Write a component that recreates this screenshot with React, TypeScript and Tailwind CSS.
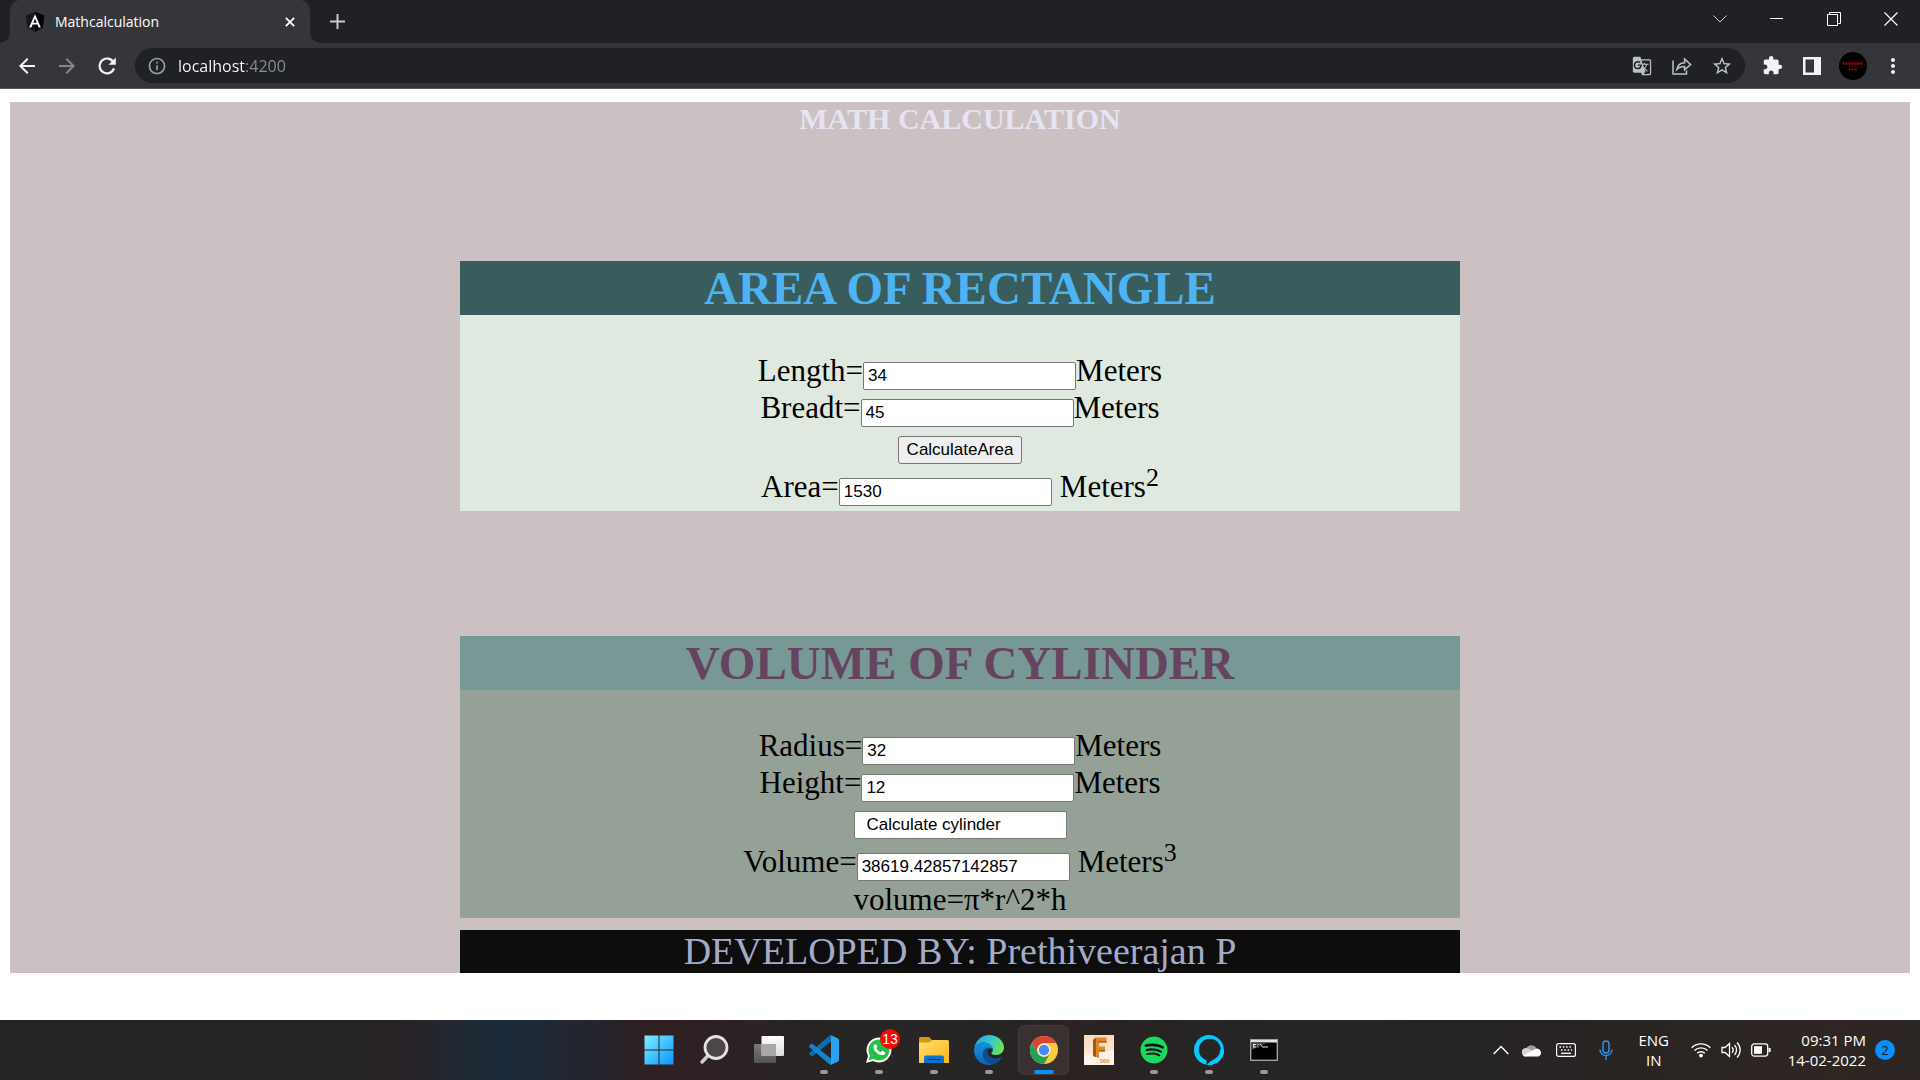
import React, { useState } from "react";
import {
  MdArrowBack,
  MdArrowForward,
  MdExtension,
  MdGTranslate,
  MdInfoOutline,
  MdMoreVert,
  MdStarBorder,
} from "react-icons/md";
import { FaSpotify, FaWhatsapp } from "react-icons/fa";

const fieldBox =
  "block h-7 w-[213px] rounded-[2px] border border-[#767676] bg-white px-1 font-['Liberation_Sans',Arial,sans-serif] text-[17px] leading-5 text-black";

function Field({
  id,
  label,
  value,
  onChange,
  unit,
  power,
}: {
  id: string;
  label: string;
  value: string;
  onChange?: (v: string) => void;
  unit: string;
  power?: string;
}) {
  return (
    <div className={power ? "flex h-[42px] items-baseline justify-center pt-px" : "flex h-[37px] items-baseline justify-center"}>
      <label htmlFor={id}>{label}=</label>
      <input
        id={id}
        className={fieldBox}
        value={value}
        readOnly={!onChange}
        onChange={(e) => onChange && onChange(e.target.value)}
      />
      <span className={power ? "pl-2" : ""}>
        {unit}
        {power && <sup className="static align-super text-[26px] leading-none">{power}</sup>}
      </span>
    </div>
  );
}

function TabBar() {
  return (
    <div className="flex h-[43px] items-stretch bg-[#202124]">
      <div className="flex w-[10px] bg-[#35363a]">
        <div className="flex-1 rounded-br-[10px] bg-[#202124]" />
      </div>
      <div className="flex w-[300px] items-center rounded-t-[10px] bg-[#35363a] pl-[14px] pr-[10px]">
        <svg width="22" height="22" viewBox="0 0 24 24" aria-hidden="true">
          <path d="M12 1 22 4.600 20.500 18 12 23 3.500 18 2 4.600z" fill="#16171f" />
          <path d="M12 1 22 4.600 20.500 18 12 23z" fill="#03040b" />
          <path d="M12 3.600 5.600 18H8l1.300-3.200h5.400L16 18h2.400zm0 4.700 1.900 4.500h-3.800z" fill="#fff" />
        </svg>
        <span className="ml-[9px] flex-1 text-[14px] leading-5 text-white">Mathcalculation</span>
        <button aria-label="Close tab" className="flex h-5 w-5 items-center justify-center">
          <svg width="10" height="10" viewBox="0 0 12 12" stroke="#fff" strokeWidth="2.200">
            <path d="M1 1l10 10M11 1 1 11" />
          </svg>
        </button>
      </div>
      <div className="flex w-[10px] bg-[#35363a]">
        <div className="flex-1 rounded-bl-[10px] bg-[#202124]" />
      </div>
      <button aria-label="New tab" className="flex w-[34px] items-center justify-center">
        <svg width="15" height="15" viewBox="0 0 15 15" stroke="#c9cacd" strokeWidth="2">
          <path d="M7.500 0v15M0 7.500h15" />
        </svg>
      </button>
      <div className="ml-auto flex h-[37px] text-white">
        <button aria-label="Search tabs" className="flex w-[57px] items-center justify-center">
          <svg width="14" height="8" viewBox="0 0 14 8" fill="none" stroke="#d5d5d7">
            <path d="M.5.5 7 7 13.500.5" />
          </svg>
        </button>
        <button aria-label="Minimize" className="flex w-[57px] items-center justify-center">
          <svg width="13" height="13" viewBox="0 0 13 13" stroke="#fff">
            <path d="M0 6.500h13" />
          </svg>
        </button>
        <button aria-label="Restore" className="flex w-[57px] items-center justify-center">
          <svg width="14" height="14" viewBox="0 0 14 14" fill="none" stroke="#fff">
            <path d="M.5 2.500h10v11H.5zM2.500 2.500v-2h11v11h-2.500" />
          </svg>
        </button>
        <button aria-label="Close window" className="flex w-[58px] items-center justify-center">
          <svg width="14" height="14" viewBox="0 0 14 14" stroke="#fff" strokeWidth="1.200">
            <path d="M.5.5l13 13M13.500.5l-13 13" />
          </svg>
        </button>
      </div>
    </div>
  );
}

function Toolbar() {
  const small = "flex h-9 w-10 items-center justify-center";
  return (
    <div className="flex h-[46px] items-center border-b border-[#5b5c60] bg-[#35363a] pl-[7px] text-[#f1f3f4]">
      <button aria-label="Back" className={small}>
        <MdArrowBack size={24} />
      </button>
      <button aria-label="Forward" className={small + " text-[#85868a]"}>
        <MdArrowForward size={24} />
      </button>
      <button aria-label="Reload" className={small}>
        <svg width="18" height="18" viewBox="0 0 18 18">
          <path d="M15.600 5.600A7.400 7.400 0 1 0 16 11.300" fill="none" stroke="#f1f3f4" strokeWidth="2.200" />
          <path d="M17.800.5v7.300h-7.300z" fill="#f1f3f4" />
        </svg>
      </button>
      <div className="ml-2 flex h-[35px] flex-1 items-center rounded-full bg-[#202124] pl-3">
        <MdInfoOutline size={20} className="text-[#9aa0a6]" />
        <input
          aria-label="Address"
          defaultValue="localhost:4200"
          className="ml-[11px] flex-1 bg-[linear-gradient(90deg,#ffffff_68px,#8b8f94_68px)] bg-clip-text text-[16px] leading-6 text-transparent outline-none"
        />
        <button aria-label="Translate page" className="flex w-10 justify-center text-[#bdc1c6]">
          <MdGTranslate size={20} />
        </button>
        <button aria-label="Share" className="flex w-10 justify-center">
          <svg width="20" height="18" viewBox="0 0 20 18" fill="none" stroke="#bdc1c6" strokeWidth="1.500">
            <path d="M1 3.500V17h13.500v-3.500" />
            <path d="M4.800 12.500C5.500 8 8.500 6 12.600 5.800V2l6 5.500-6 5.300V9.500C9 9.500 6.800 10.300 4.800 12.500z" />
          </svg>
        </button>
        <button aria-label="Bookmark this tab" className="mr-[3px] flex w-10 justify-center text-[#bdc1c6]">
          <MdStarBorder size={22} />
        </button>
      </div>
      <button aria-label="Extensions" className="ml-[7px] flex w-10 justify-center">
        <MdExtension size={21} />
      </button>
      <button aria-label="Side panel" className="flex w-10 justify-center">
        <svg width="18" height="18" viewBox="0 0 18 18">
          <path d="M0 0h18v18H0zM2.500 2.500v13H11v-13z" fill="#f1f3f4" fillRule="evenodd" />
        </svg>
      </button>
      <button aria-label="Profile" className="flex w-[41px] justify-center">
        <span className="flex h-7 w-7 flex-col items-center justify-center rounded-full bg-black">
          <svg width="22" height="12" viewBox="0 0 22 12" fill="none" stroke="#b00d12" strokeWidth="1.300">
            <path d="M1 3.500h2m.8 0h2m.8 0h2.400m.8 0h1.500m.8 0h2.500m.8 0h2m.8 0h2.500" strokeWidth="2.600" strokeDasharray="1.500 .6" />
            <path d="M7 9.500h2m.7 0h2m.7 0h2.500" strokeWidth="2.200" strokeDasharray="1.300 .5" />
          </svg>
        </span>
      </button>
      <button aria-label="Menu" className="mr-2 flex w-[39px] justify-center">
        <MdMoreVert size={24} />
      </button>
    </div>
  );
}

function TaskItem({
  name,
  children,
  running,
  active,
}: {
  name: string;
  children: React.ReactNode;
  running?: boolean;
  active?: boolean;
}) {
  return (
    <button
      aria-label={name}
      className={
        active
          ? "relative mx-[2px] flex h-[50px] w-[51px] items-center justify-center rounded-md border border-[#443b3c] bg-[#383031]"
          : "relative mx-[2px] flex h-[50px] w-[51px] items-center justify-center"
      }
    >
      {children}
      {running && <span className="absolute inset-x-0 bottom-px mx-auto h-1 w-2 rounded-full bg-[#9b9898]" />}
      {active && <span className="absolute inset-x-0 bottom-0 mx-auto h-1 w-5 rounded-full bg-[#0a8fff]" />}
    </button>
  );
}

function Apps() {
  return (
    <div className="flex items-center pl-[2px]">
      <TaskItem name="Start">
        <svg width="30" height="30" viewBox="0 0 30 30">
          <defs>
            <linearGradient id="win" x1="0" y1="0" x2="1" y2="1">
              <stop offset="0" stopColor="#7df0ff" />
              <stop offset="1" stopColor="#0a95ff" />
            </linearGradient>
          </defs>
          <path d="M.5.5h14v14H.5zM15.500.5h14v14h-14zM.5 15.500h14v14H.5zM15.500 15.500h14v14h-14z" fill="url(#win)" />
        </svg>
      </TaskItem>
      <TaskItem name="Search">
        <svg width="30" height="30" viewBox="0 0 30 30">
          <path d="M10.500 19 3 27" stroke="#cfcfd1" strokeWidth="3.500" strokeLinecap="round" />
          <circle cx="17" cy="12.500" r="11" fill="#4d4546" stroke="#dfe1e4" strokeWidth="2.800" />
        </svg>
      </TaskItem>
      <TaskItem name="Task view">
        <svg width="30" height="30" viewBox="0 0 30 30">
          <defs>
            <linearGradient id="tv" x1="0" y1="0" x2="0" y2="1">
              <stop offset="0" stopColor="#fff" />
              <stop offset="1" stopColor="#dcdcdc" />
            </linearGradient>
            <linearGradient id="tvb" x1="0" y1="0" x2="0" y2="1">
              <stop offset="0" stopColor="#7d7979" />
              <stop offset="1" stopColor="#555253" />
            </linearGradient>
          </defs>
          <rect y="9" width="22" height="19" rx="1" fill="url(#tvb)" />
          <rect x="7.500" y="1" width="22.500" height="20" rx="1" fill="url(#tv)" />
          <path d="M7.500 9H22v12H8.500a1 1 0 0 1-1-1z" fill="#a9a7a7" />
        </svg>
      </TaskItem>
      <TaskItem name="Visual Studio Code" running>
        <svg width="30" height="30" viewBox="0 0 30 30">
          <path d="M22 6.500 3.600 20.900a1.200 1.200 0 0 1-1.600 0L.5 19.500a1.200 1.200 0 0 1 0-1.800L20.600.6 22 1z" fill="#0a6db5" />
          <path d="M22 23.500 3.600 9.100a1.200 1.200 0 0 0-1.600 0L.5 10.500a1.200 1.200 0 0 0 0 1.800l20.100 17.100L22 29z" fill="#1583cc" />
          <path d="M22.200 29.800a1.900 1.900 0 0 1-2-.5c.7.700 1.800.2 1.800-.8v-27c0-1-1.100-1.500-1.800-.8a1.900 1.900 0 0 1 2-.5l6.800 3.300c.6.300 1 .9 1 1.600v19.800c0 .7-.4 1.300-1 1.600z" fill="#2ba3f2" />
        </svg>
      </TaskItem>
      <TaskItem name="WhatsApp" running>
        <svg width="28" height="28" viewBox="0 0 28 28">
          <path d="M1 27 3 20a12.500 12.500 0 1 1 5 5z" fill="#fff" />
          <path d="M3.500 24.500 5 19.600a10.500 10.500 0 1 1 3.600 3.500z" fill="#25c04a" />
          <path d="M10.200 8.200c-.5 0-1.700.9-1.700 2.700 0 3.800 4.900 8.300 8.800 8.300 1.900 0 3-1.200 3-2.500 0-.5-2.700-1.900-3.100-1.900-.6 0-1 1.500-1.600 1.500-.9 0-4.300-3-4.300-4.200 0-.5 1-1 1-1.500S11.200 8.200 10.200 8.200z" fill="#fff" />
        </svg>
        <span className="absolute right-1 top-1 flex h-5 w-5 items-center justify-center rounded-full bg-[#fb0505] font-['Liberation_Sans',Arial,sans-serif] text-[14px] leading-none text-white">
          13
        </span>
      </TaskItem>
      <TaskItem name="File Explorer" running>
        <svg width="30" height="30" viewBox="0 0 30 30">
          <defs>
            <linearGradient id="fold" x1="0" y1="0" x2="1" y2="1">
              <stop offset="0" stopColor="#ffdd75" />
              <stop offset="1" stopColor="#fdb913" />
            </linearGradient>
          </defs>
          <path d="M0 3.500A1.500 1.500 0 0 1 1.500 2H10l2.500 2.500V10H0z" fill="#d99a06" />
          <path d="M0 7.500h10L13 5h15.500A1.500 1.500 0 0 1 30 6.500V28H0z" fill="url(#fold)" />
          <path d="M5 28v-5.500a2 2 0 0 1 2-2h16a2 2 0 0 1 2 2V28z" fill="#0b74cc" />
          <path d="M8.500 24.500h13" stroke="#07427f" strokeWidth="1.200" />
        </svg>
      </TaskItem>
      <TaskItem name="Microsoft Edge" running>
        <svg width="30" height="30" viewBox="0 0 30 30">
          <defs>
            <linearGradient id="edgeTop" x1="0" y1=".3" x2="1" y2=".6">
              <stop offset="0" stopColor="#2aa5dd" />
              <stop offset=".5" stopColor="#36c6cf" />
              <stop offset="1" stopColor="#6be848" />
            </linearGradient>
            <linearGradient id="edgeMid" x1="0" y1="0" x2="0" y2="1">
              <stop offset="0" stopColor="#1593d8" />
              <stop offset="1" stopColor="#0d63b8" />
            </linearGradient>
          </defs>
          <path d="M.3 13.500C1.500 5.500 7.500 0 15 0c8.500 0 15 6 15 12.500 0 4.500-3.500 7.500-8 7.500-3.300 0-5.200-1-4.500-2.300 1-1.200 1.500-2 1.300-3.500C18 9.500 13 7.500 9.500 7.500 5 7.500 1.500 10 .3 13.500z" fill="url(#edgeTop)" />
          <path d="M0 15C0 10.500 4.500 7.300 9.500 7.300c4.300 0 8.700 2.400 9.300 6.700-4-2.500-8.300 1.500-7.300 6 1 5 6 8.500 10.500 7.500C19.500 29.200 17.500 30 15 30 6.500 30 0 23.500 0 15z" fill="url(#edgeMid)" />
          <path d="M13.500 12.500C9 14 7.700 19 9.700 23.300c1.800 3.900 6.300 6.500 9.300 6.100 4-1 7.300-3.400 9-6.800.2-.6-.2-.8-.7-.5-6 3-13.800.4-13.800-5.600 0-1.300.5-2.500 1.500-3.300z" fill="#114a8e" />
        </svg>
      </TaskItem>
      <TaskItem name="Google Chrome" active>
        <svg width="28" height="28" viewBox="0 0 28 28">
          <circle cx="14" cy="14" r="14" fill="#fcca41" />
          <path d="M14 0a14 14 0 0 1 12.120 7H14a7 7 0 0 0-6.060 10.500L1.880 7A14 14 0 0 1 14 0z" fill="#dc4437" />
          <path d="M1.880 7l6.060 10.500A7 7 0 0 0 14 21c2.600 0 4.800-1.400 6.060-3.500L14 28A14 14 0 0 1 1.880 7z" fill="#1fa15d" />
          <circle cx="14" cy="14" r="6.500" fill="#f5f5f5" />
          <circle cx="14" cy="14" r="5.200" fill="#4889f4" />
        </svg>
      </TaskItem>
      <TaskItem name="Fusion 360">
        <span className="relative flex h-[30px] w-[30px] justify-center bg-gradient-to-b from-[#fbd9b9] to-[#fdf0e4]">
          <svg width="30" height="30" viewBox="0 0 30 30">
            <path d="M0 21 30 15v15H0z" fill="#fff4ea" />
            <path d="M9 5l3-2.500h10.500v5H15v4h6v5h-6V23l-3-1-3-1z" fill="#e0862d" />
            <path d="M9 5l3-2.500V22l-3-1z" fill="#a9560f" />
            <path d="M15 7.500h7.500V6H13.500zM15 16.500h6V15h-6z" fill="#b9641a" />
          </svg>
          <span className="absolute bottom-px right-1 font-['Liberation_Sans',Arial,sans-serif] text-[6px] font-bold leading-none text-[#e2924d]">
            360
          </span>
        </span>
      </TaskItem>
      <TaskItem name="Spotify" running>
        <span className="flex h-7 w-7 items-center justify-center rounded-full bg-[#151515]">
          <FaSpotify size={28} className="text-[#1ed760]" />
        </span>
      </TaskItem>
      <TaskItem name="Alexa" running>
        <svg width="30" height="30" viewBox="0 0 30 30">
          <path d="M12.500 29.800A15 15 0 1 1 15.500 30l-3-.2v-4.600A11 11 0 1 1 19.500 25C17 26.500 15.500 28 12.500 29.800z" fill="#00caff" fillRule="evenodd" />
          <path d="M15 30A15 15 0 0 0 30 15h-4c0 6-4.500 9-8 10.500-2 1-3 2-4.500 4.400z" fill="#00caff" />
        </svg>
      </TaskItem>
      <TaskItem name="Command Prompt" running>
        <svg width="28" height="22" viewBox="0 0 28 22">
          <rect x=".7" y=".7" width="26.600" height="20.600" fill="#000" stroke="#9aa0a8" strokeWidth="1.400" />
          <path d="M1 1h26v2.500H1z" fill="#dfe3e8" />
          <path d="M1.400 3.500H18L1.400 11z" fill="#444" />
          <path d="M3.500 5.500h2.500M3.500 8h2.500M3.500 5v3.500M8 5v1m0 1.500v1M10 5l3 3.500M13 8h5" stroke="#e4e4e4" fill="none" />
        </svg>
      </TaskItem>
    </div>
  );
}

function Tray() {
  return (
    <div className="flex items-center justify-end pr-[25px] text-white">
      <button aria-label="Show hidden icons" className="flex w-[30px] justify-center">
        <svg width="16" height="10" viewBox="0 0 16 10" fill="none" stroke="#fff" strokeWidth="1.400">
          <path d="M.7 9 8 1.500 15.300 9" />
        </svg>
      </button>
      <svg className="mx-[5px]" width="20" height="14" viewBox="0 0 20 14" aria-label="OneDrive">
        <path d="M5 5.500A6 6 0 0 1 15.500 5L12 9z" fill="#9f9c9b" />
        <path d="M4.500 13.500a4.300 4.300 0 0 1 0-8.500c2 0 3.500.8 4.500 1.500l6 4-10 3z" fill="#d6d4d4" />
        <path d="M2 12.700 14 6a4.200 4.200 0 0 1 6 4 3.600 3.600 0 0 1-4 3.500H4.500c-1 0-1.800-.2-2.500-.8z" fill="#fff" />
      </svg>
      <svg className="ml-[10px]" width="20" height="14" viewBox="0 0 20 14" fill="none" stroke="#fff" aria-label="Touch keyboard">
        <rect x=".6" y=".6" width="18.800" height="12.800" rx="2" strokeWidth="1.200" />
        <path d="M3.500 4h13M5 7h11" strokeWidth="1.500" strokeDasharray="1.500 1.800" />
        <path d="M5 10.300h10" strokeWidth="1.300" />
      </svg>
      <svg className="ml-[23px]" width="14" height="20" viewBox="0 0 14 20" fill="none" stroke="#2f8fe0" strokeWidth="1.500" aria-label="Microphone">
        <rect x="4" y="1" width="6" height="12" rx="3" />
        <path d="M1 9.500a6 6 0 0 0 12 0M7 15.500V20" />
      </svg>
      <button className="ml-3 w-[58px] text-center text-[15px] leading-5" aria-label="Input language">
        ENG
        <br />
        IN
      </button>
      <button aria-label="Network, volume and battery" className="ml-2 flex items-center gap-[10px]">
        <svg width="20" height="16" viewBox="0 0 20 16" fill="none" stroke="#fff" strokeWidth="1.400">
          <path d="M.7 5.800a13 13 0 0 1 18.600 0M3.500 8.600a9.200 9.200 0 0 1 13 0M6.200 11.300a5.400 5.400 0 0 1 7.600 0" />
          <circle cx="10" cy="13.600" r="1.200" fill="#fff" />
        </svg>
        <svg width="20" height="18" viewBox="0 0 20 18" fill="none" stroke="#fff" strokeWidth="1.300">
          <path d="M1 6.500h3L8.500 2.500v13L4 11.500H1z" />
          <path d="M11 6.300a4 4 0 0 1 0 5.400M13.500 4a7.200 7.200 0 0 1 0 10M16 1.500a10.500 10.500 0 0 1 0 15" />
        </svg>
        <svg width="20" height="14" viewBox="0 0 20 14" fill="none" stroke="#fff" strokeWidth="1.300">
          <rect x=".7" y=".9" width="16" height="12.200" rx="2.500" />
          <path d="M3 3.200h8v7.600H3z" fill="#fff" stroke="none" />
          <path d="M18.600 5v4" strokeWidth="2" />
        </svg>
      </button>
      <button className="ml-[17px] text-right text-[15px] leading-5" aria-label="Date and time">
        09:31 PM
        <br />
        14-02-2022
      </button>
      <span className="ml-[9px] flex h-5 w-5 items-center justify-center rounded-full bg-[#0a8fff] text-[13px] leading-none text-[#10202e]">
        2
      </span>
    </div>
  );
}

export default function App() {
  const [length, setLength] = useState("34");
  const [breadth, setBreadth] = useState("45");
  const [area, setArea] = useState("1530");
  const [radius, setRadius] = useState("32");
  const [height, setHeight] = useState("12");
  const [volume, setVolume] = useState("38619.42857142857");

  return (
    <div className="flex min-h-screen flex-col bg-white font-['Open_Sans','Noto_Sans',sans-serif]">
      <header>
        <TabBar />
        <Toolbar />
      </header>

      <main className="flex-1 px-[10px] pt-[13px] font-['Liberation_Serif','Times_New_Roman',serif] text-[31px] leading-[37px] text-black">
        <div className="bg-[#cbc1c2]">
          <h1 className="pb-[126px] text-center text-[30px] font-bold leading-[33px] text-[#e6e3f3]">MATH CALCULATION</h1>

          <section className="mx-auto max-w-[1000px] bg-[#dfe9df] pb-[5px]">
            <h2 className="mb-[37px] bg-[#395c5c] text-center text-[47px] font-bold leading-[54px] text-[#4db3f2]">
              AREA OF RECTANGLE
            </h2>
            <Field id="length" label="Length" value={length} onChange={setLength} unit="Meters" />
            <Field id="breadth" label="Breadt" value={breadth} onChange={setBreadth} unit="Meters" />
            <div className="flex h-[38px] items-end justify-center">
              <button
                onClick={() => setArea(String(Number(length) * Number(breadth)))}
                className="h-7 rounded-[3px] border border-[#767676] bg-[#efefef] px-2 font-['Liberation_Sans',Arial,sans-serif] text-[17px] leading-5"
              >
                CalculateArea
              </button>
            </div>
            <Field id="area" label="Area" value={area} unit="Meters" power="2" />
          </section>

          <section className="mx-auto mt-[125px] max-w-[1000px] bg-[#95a096]">
            <h2 className="mb-[37px] bg-[#789896] text-center text-[47px] font-bold leading-[54px] text-[#66445f]">
              VOLUME OF CYLINDER
            </h2>
            <Field id="radius" label="Radius" value={radius} onChange={setRadius} unit="Meters" />
            <Field id="height" label="Height" value={height} onChange={setHeight} unit="Meters" />
            <div className="flex h-[38px] items-end justify-center">
              <button
                onClick={() => setVolume(String((22 / 7) * Number(radius) ** 2 * Number(height)))}
                className="h-7 w-[213px] rounded-[2px] border border-[#767676] bg-white pl-3 text-left font-['Liberation_Sans',Arial,sans-serif] text-[17px] leading-5"
              >
                Calculate cylinder
              </button>
            </div>
            <Field id="volume" label="Volume" value={volume} unit="Meters" power="3" />
            <p className="text-center">volume=π*r^2*h</p>
          </section>

          <footer className="mx-auto mt-3 max-w-[1000px] bg-[#0d0d0d] text-center text-[38px] leading-[43px] text-[#a2acc8]">
            DEVELOPED BY: Prethiveerajan P
          </footer>
        </div>
      </main>

      <nav
        aria-label="Taskbar"
        className="grid h-[60px] grid-cols-[1fr_auto_1fr] items-center bg-[linear-gradient(90deg,#262423_0%,#242426_8%,#252424_18%,#282326_21%,#1b2a3a_26%,#222530_30%,#301f23_34%,#282424_42%,#262525_51%,#2c2222_56%,#262525_64%,#272423_82%,#2f2622_96%,#2a2423_100%)]"
      >
        <div />
        <Apps />
        <Tray />
      </nav>
    </div>
  );
}
